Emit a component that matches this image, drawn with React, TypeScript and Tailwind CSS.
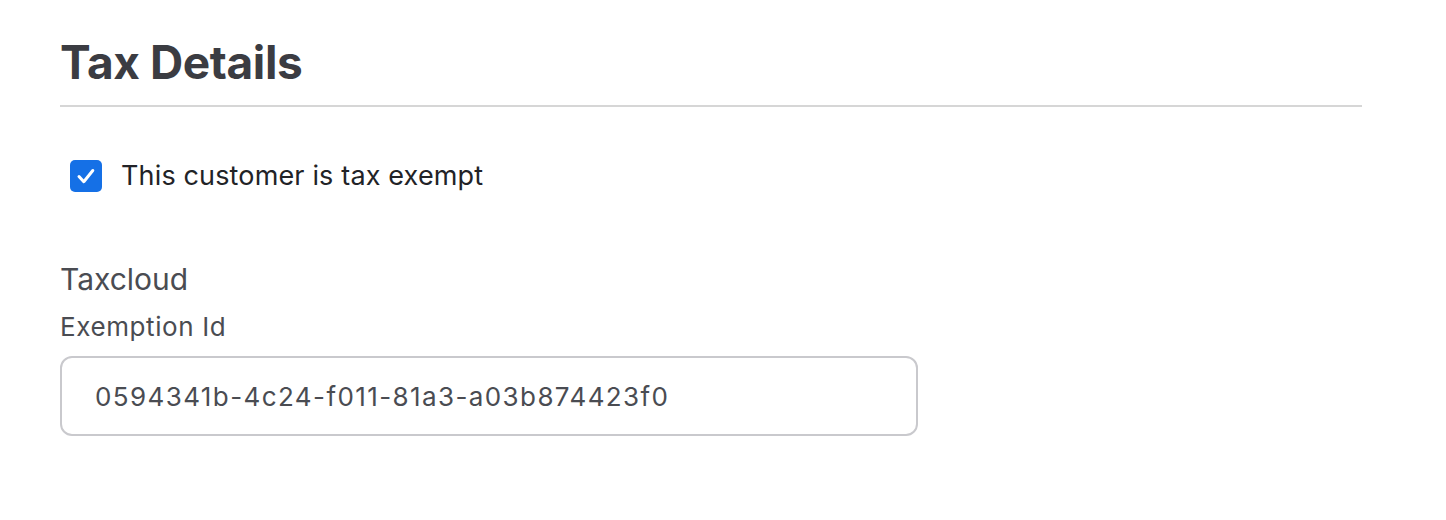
export default function App() {
  return (
    <div className="min-h-[520px] bg-white px-[60px] pt-[34px] font-['Inter',sans-serif]">
      <div className="w-[1302px]">
        <h1 className="text-[46px] font-bold leading-[56px] tracking-[-0.4px] text-[#3b3c42]">Tax Details</h1>
        <div className="mt-[15px] h-[2px] bg-[#d6d6d6]" />

        <label className="mt-[52px] ml-[10px] flex items-center gap-[19px]">
          <span className="flex h-[32px] w-[32px] items-center justify-center rounded-[5px] bg-[#1570e6]">
            <svg width="32" height="32" viewBox="0 0 32 32" fill="none">
              <path d="M9 16.5l4.8 5.2 9-11.2" stroke="white" strokeWidth="3" strokeLinecap="round" strokeLinejoin="round" />
            </svg>
          </span>
          <span className="text-[27px] leading-[34px] tracking-[0.15px] text-[#222327]">This customer is tax exempt</span>
        </label>

        <div className="mt-[68px] text-[30px] leading-[36px] text-[#4a4c52]">Taxcloud</div>
        <div className="mt-[15px] text-[26px] leading-[30px] tracking-[0.6px] text-[#4a4c52]">Exemption Id</div>
        <div className="mt-[14px] flex h-[80px] w-[858px] items-center rounded-[12px] border-2 border-[#c9c9cd] px-[33px]">
          <span className="text-[26px] tracking-[1.4px] text-[#4a4c52]">0594341b-4c24-f011-81a3-a03b874423f0</span>
        </div>
      </div>
    </div>
  )
}
